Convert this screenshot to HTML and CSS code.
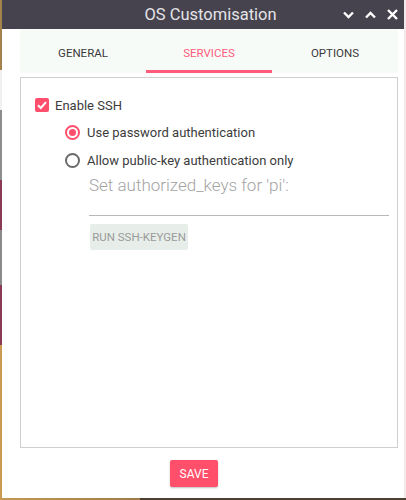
FILE: index.html
```html
<!DOCTYPE html>
<html>
<head>
<meta charset="utf-8">
<link rel="stylesheet" href="styles.css">
</head>
<body>
<div class="window">
  <div class="titlebar">
    <span class="title">OS Customisation</span>
    <div class="controls">
      <svg class="ctl" width="11" height="10" viewBox="0 0 11 10"><path d="M1 2.5 L5.5 7 L10 2.5" fill="none" stroke="#fff" stroke-width="2.4"/></svg>
      <svg class="ctl" width="11" height="10" viewBox="0 0 11 10"><path d="M1 7.5 L5.5 3 L10 7.5" fill="none" stroke="#fff" stroke-width="2.4"/></svg>
      <svg class="ctl" width="11" height="11" viewBox="0 0 11 11"><path d="M1 1 L10 10 M10 1 L1 10" fill="none" stroke="#fff" stroke-width="2.4"/></svg>
    </div>
  </div>
  <div class="body">
    <div class="tabs">
      <div class="tab">GENERAL</div>
      <div class="tab active">SERVICES</div>
      <div class="tab">OPTIONS</div>
    </div>
    <div class="frame">
      <div class="row check-row">
        <span class="checkbox"><svg width="14" height="14" viewBox="0 0 14 14"><path d="M3 7.2 L5.8 10 L11 4.2" fill="none" stroke="#fff" stroke-width="2"/></svg></span>
        <span class="label">Enable SSH</span>
      </div>
      <div class="row radio-row">
        <span class="radio checked"><span class="dot"></span></span>
        <span class="label">Use password authentication</span>
      </div>
      <div class="row radio-row">
        <span class="radio"></span>
        <span class="label">Allow public-key authentication only</span>
      </div>
      <div class="keys">
        <div class="field">Set authorized_keys for 'pi':</div>
        <button class="keygen">RUN SSH-KEYGEN</button>
      </div>
    </div>
    <div class="footer">
      <button class="save">SAVE</button>
    </div>
  </div>
</div>
</body>
</html>
```

FILE: styles.css
```css
html, body {
  margin: 0;
  padding: 0;
}
body {
  width: 406px;
  height: 500px;
  overflow: hidden;
  font-family: Roboto, "Liberation Sans", sans-serif;
  background:
    linear-gradient(to bottom, #a4824c 0, #a4824c 70px, #f0f0f0 70px, #f0f0f0 110px, #8d8d8d 110px, #8d8d8d 180px, #8a3a52 180px, #8a3a52 230px, #8a8a8a 230px, #8a8a8a 285px, #8a3a52 285px, #8a3a52 345px, #c99a52 345px, #c99a52 500px) left top / 2px 500px no-repeat,
    linear-gradient(to right, #c49855 0, #a07a48 140px, #4e4030 140px, #4e4030 406px) left bottom / 406px 2px no-repeat,
    #f3e9ea;
}
.window {
  width: 402px;
  height: 498px;
  margin-left: 2px;
  background: #fff;
  display: flex;
  flex-direction: column;
}
.titlebar {
  height: 29px;
  background: #46434f;
  display: flex;
  align-items: center;
  position: relative;
}
.title {
  flex: 1;
  text-align: center;
  color: #e4e4e6;
  font-size: 16.5px;
  font-weight: 400;
  padding-left: 15px;
}
.controls {
  position: absolute;
  right: 6px;
  top: 9px;
  display: flex;
  align-items: center;
  gap: 11px;
}
.ctl {
  display: block;
}
.body {
  flex: 1;
  display: flex;
  flex-direction: column;
  padding: 0 6px 0 18px;
}
.tabs {
  display: flex;
  height: 44px;
  background: #f7fbf8;
}
.tab {
  flex: 1;
  display: flex;
  align-items: center;
  justify-content: center;
  font-size: 11.5px;
  color: #3a3a3a;
  padding-top: 6px;
  border-bottom: 3px solid transparent;
  box-sizing: border-box;
}
.tab.active {
  color: #ff5c7c;
  border-bottom-color: #ff5c7c;
}
.frame {
  margin-top: 4px;
  height: 371px;
  box-sizing: border-box;
  border: 1px solid #cfcfcf;
  padding: 20px 0 0 14px;
}
.row {
  display: flex;
  align-items: center;
}
.check-row {
  height: 14px;
  gap: 6px;
  margin-bottom: 6px;
}
.checkbox {
  width: 14px;
  height: 14px;
  border-radius: 2px;
  background: #ff4f6d;
  display: block;
}
.checkbox svg {
  display: block;
}
.label {
  font-size: 13px;
  color: #3c3c3c;
}
.radio-row {
  height: 28px;
  padding-left: 30px;
  gap: 7px;
}
.radio {
  width: 15px;
  height: 15px;
  box-sizing: border-box;
  border: 2px solid #6a6a6a;
  border-radius: 50%;
  display: flex;
  align-items: center;
  justify-content: center;
}
.radio.checked {
  border-color: #ff4f6d;
}
.dot {
  width: 7px;
  height: 7px;
  border-radius: 50%;
  background: #ff4f6d;
}
.keys {
  padding-left: 54px;
}
.field {
  width: 300px;
  height: 42px;
  box-sizing: border-box;
  border-bottom: 1px solid #b8b8b8;
  font-size: 17px;
  font-weight: 300;
  color: #a4a4a4;
  line-height: 22px;
}
.keygen {
  margin: 8px 0 0 1px;
  height: 26px;
  width: 98px;
  border: none;
  border-radius: 2px;
  background: #e7eee9;
  color: #9a9a9a;
  font-family: Roboto, "Liberation Sans", sans-serif;
  font-size: 11.5px;
  padding: 0;
}
.footer {
  display: flex;
  justify-content: center;
  padding-top: 12px;
  padding-right: 30px;
}
.save {
  width: 48px;
  height: 27px;
  border: none;
  border-radius: 2px;
  background: #ff4f6a;
  color: #fff;
  font-family: Roboto, "Liberation Sans", sans-serif;
  font-size: 12px;
  padding: 0;
  box-shadow: 0 1px 2px rgba(0,0,0,0.25);
}
```
